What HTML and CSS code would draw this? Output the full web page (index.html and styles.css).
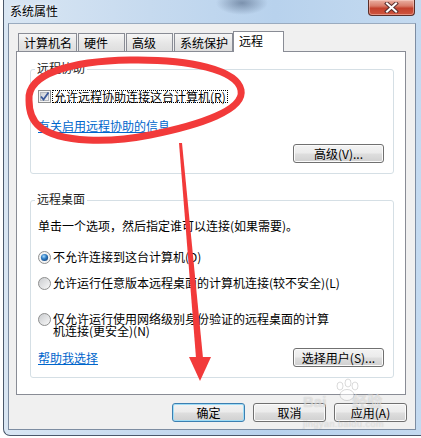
FILE: index.html
```html
<!DOCTYPE html>
<html>
	<head>
		<meta charset="utf-8">
		<title>系统属性</title>
		<link rel="stylesheet" href="styles.css">
	</head>
	<body>
	<div class="window">
		<div class="titlebar">
			<span class="title">系统属性</span>
			<div class="close">
				<svg width="15" height="11" viewBox="0 0 15 11">
					<path d="M3 1.5 L12 9.5 M12 1.5 L3 9.5" stroke="#5a3030" stroke-width="4" stroke-linecap="square" fill="none"/>
					<path d="M3 1.5 L12 9.5 M12 1.5 L3 9.5" stroke="#fff" stroke-width="2" stroke-linecap="square" fill="none"/>
				</svg>
			</div>
		</div>
		<div class="frame">
			<div class="client">
				<ul class="tabs">
					<li class="tab">计算机名</li>
					<li class="tab">硬件</li>
					<li class="tab">高级</li>
					<li class="tab">系统保护</li>
					<li class="tab tab_on">远程</li>
				</ul>
				<div class="panel">
					<!--远程协助-->
					<div class="group group_assist">
						<div class="group_title">远程协助</div>
						<div class="check_row">
							<svg class="checkbox" width="13" height="13" viewBox="0 0 13 13">
								<defs>
									<linearGradient id="cbg" x1="0" y1="0" x2="1" y2="1">
										<stop offset="0" stop-color="#cbcfd5"/>
										<stop offset="1" stop-color="#f6f6f6"/>
									</linearGradient>
								</defs>
								<rect x="0.5" y="0.5" width="12" height="12" fill="#f4f4f4" stroke="#8e8f8f"/>
								<rect x="2.5" y="2.5" width="8" height="8" fill="url(#cbg)" stroke="#b4b8be"/>
								<path d="M3 6.5 L5.5 9.5 L10.5 2.5" stroke="#3c5a9a" stroke-width="1.8" fill="none"/>
							</svg>
							<span class="focus">允许远程协助连接这台计算机(R)</span>
						</div>
						<a class="link" href="javascript:;">有关启用远程协助的信息</a>
						<div class="btn_row btn_row_end">
							<span class="btn btn_wide">高级(V)...</span>
						</div>
					</div>
					<!--远程桌面-->
					<div class="group group_desk">
						<div class="group_title">远程桌面</div>
						<p class="desc">单击一个选项，然后指定谁可以连接(如果需要)。</p>
						<div class="radio_row radio_first">
							<svg class="radio" width="13" height="13" viewBox="0 0 13 13">
								<defs>
									<radialGradient id="rdot" cx="0.4" cy="0.35" r="0.7">
										<stop offset="0" stop-color="#a9dcfb"/>
										<stop offset="0.5" stop-color="#2f7cc4"/>
										<stop offset="1" stop-color="#17487f"/>
									</radialGradient>
								</defs>
								<circle cx="6.5" cy="6.5" r="6" fill="#f2f2f2" stroke="#8e8f8f"/>
								<circle cx="6.5" cy="6.5" r="3.6" fill="url(#rdot)"/>
							</svg>
							<span>不允许连接到这台计算机(D)</span>
						</div>
						<div class="radio_row">
							<svg class="radio" width="13" height="13" viewBox="0 0 13 13">
								<defs>
									<linearGradient id="roff" x1="0" y1="0" x2="1" y2="1">
										<stop offset="0" stop-color="#c8cacd"/>
										<stop offset="1" stop-color="#fafafa"/>
									</linearGradient>
								</defs>
								<circle cx="6.5" cy="6.5" r="6" fill="url(#roff)" stroke="#8e8f8f"/>
							</svg>
							<span>允许运行任意版本远程桌面的计算机连接(较不安全)(L)</span>
						</div>
						<div class="radio_row radio_multi">
							<svg class="radio" width="13" height="13" viewBox="0 0 13 13">
								<circle cx="6.5" cy="6.5" r="6" fill="url(#roff)" stroke="#8e8f8f"/>
							</svg>
							<span class="multi_text">仅允许运行使用网络级别身份验证的远程桌面的计算机连接(更安全)(N)</span>
						</div>
						<div class="btn_row">
							<a class="link link_inline" href="javascript:;">帮助我选择</a>
							<span class="btn btn_wide">选择用户(S)...</span>
						</div>
					</div>
				</div>
				<div class="dialog_btns">
					<span class="btn btn_default">确定</span>
					<span class="btn">取消</span>
					<span class="btn">应用(A)</span>
				</div>
			</div>
		</div>
	</div>
	<!--标注-->
	<svg class="marks" width="421" height="438" viewBox="0 0 421 438">
		<path d="M29 100 C27 74 70 61 130 60 C190 59 237 70 241 90 C245 110 200 125 150 135 C110 143 60 143 40 127 C31 120 29 110 29 100 Z" fill="none" stroke="#f23a3a" stroke-width="7"/>
		<polygon points="179,143 182,143 203,358 196,358" fill="#f23a3a"/>
		<polygon points="189,357 211,357 200,381" fill="#f23a3a"/>
		<!--水印爪印-->
		<g fill="rgba(255,255,255,.55)" stroke="rgba(120,120,120,.35)" stroke-width="0.8">
			<ellipse cx="340" cy="386" rx="3" ry="4"/>
			<ellipse cx="348" cy="383" rx="3" ry="4"/>
			<ellipse cx="355" cy="386" rx="3" ry="4"/>
			<ellipse cx="347" cy="395" rx="7" ry="5.5"/>
		</g>
	</svg>
	<div class="watermark">
		<span class="wm_big">Bai<span class="wm_gap"></span>经验</span>
		<span class="wm_small">jingyan.baidu.com</span>
	</div>
	</body>
</html>
```

FILE: styles.css
```css
*{margin:0;padding:0;box-sizing:border-box;list-style:none;}
body{width:421px;height:438px;overflow:hidden;background:#fff;font:12px/14px "Noto Sans CJK SC","DejaVu Sans",sans-serif;color:#000;position:relative;}
/*窗口*/
.window{margin-left:3px;width:418px;height:436px;border-left:1px solid #4a586b;border-bottom:1px solid #4a586b;border-bottom-left-radius:7px;background:radial-gradient(ellipse 26px 12px at 238px 3px,rgba(70,90,120,.55),rgba(70,90,120,0)),linear-gradient(to right,#d9e6f3 0%,#c6daef 35%,#b8d2ed 65%,#c4daf0 100%);}
.titlebar{display:flex;justify-content:space-between;height:23px;padding:0 6px;}
.title{margin-top:4px;line-height:14px;text-shadow:0 0 5px #eef4fb,0 0 3px #eef4fb;}
.close{width:47px;height:16px;border:1px solid #5b2e28;border-top:none;border-radius:0 0 4px 4px;background:linear-gradient(#eab0a3 0%,#d87b69 40%,#c3412d 55%,#cf5640 100%);box-shadow:inset 0 0 0 1px rgba(255,220,210,.45);display:flex;align-items:center;justify-content:center;}
.frame{padding:0 5px 5px 4px;}
.client{height:407px;background:#f0f0f0;border:1px solid #7d8da2;border-top-color:#9aabbf;padding:7px 8px 7px 7px;}
/*选项卡*/
.tabs{display:flex;align-items:flex-end;height:20px;padding-left:2px;position:relative;z-index:1;}
.tab{height:18px;min-width:47px;padding:0 4px 0 5px;margin-right:1px;border:1px solid #898c95;border-bottom:none;background:linear-gradient(#f6f6f6,#e6e6e6 55%,#dedede);line-height:17px;white-space:nowrap;}
.tab_on{height:21px;width:51px;margin:0 0 -1px -1px;padding-left:5px;background:#fff;line-height:18px;}
.panel{height:344px;margin-right:1px;border:1px solid #898c95;background:#fff;padding-top:17px;}
/*分组*/
.group{margin:0 11px 0 13px;border:1px solid #d5dfe5;border-radius:3px;padding:0 9px 10px 7px;}
.group_assist{height:105px;}
.group_desk{height:178px;margin-top:26px;}
.group_title{width:max-content;margin:-9px 0 0 -3px;padding:0 2px;background:#fff;line-height:14px;color:#1b1b1b;}
.check_row{display:flex;align-items:center;height:13px;margin-top:15px;}
.checkbox{flex:none;margin-right:1px;}
.focus{height:13px;border:1px dotted #000;padding:0 1px;line-height:11px;white-space:nowrap;}
.link{display:block;width:max-content;margin-top:16px;color:#0066cc;text-decoration:underline;line-height:14px;}
.link_inline{margin-top:0;}
.btn_row{display:flex;justify-content:space-between;align-items:center;margin-top:11px;}
.btn_row_end{justify-content:flex-end;}
.desc{margin-top:13px;line-height:14px;}
.radio_row{display:flex;align-items:center;height:14px;}
.radio_first{margin-top:17px;}
.radio_row+.radio_row{margin-top:12px;}
.radio_row+.radio_multi{margin-top:23px;height:auto;align-items:flex-start;}
.radio{flex:none;margin-right:2px;}
.multi_text{width:282px;line-height:12px;}
/*按钮*/
.btn{display:flex;align-items:center;justify-content:center;width:73px;height:19px;border:1px solid #707070;border-radius:3px;background:linear-gradient(#f3f3f3 0%,#ebebeb 48%,#dedede 52%,#d0d0d0 100%);box-shadow:inset 0 0 0 1px #fbfbfb;line-height:17px;white-space:nowrap;}
.btn_wide{width:91px;}
.btn_default{border-color:#3c7fb1;box-shadow:inset 0 0 0 1px #9fdcf6;}
.dialog_btns{display:flex;justify-content:flex-end;gap:8px;margin-top:8px;}
/*标注*/
.marks{position:absolute;left:0;top:0;pointer-events:none;}
.watermark{position:absolute;left:303px;top:393px;display:flex;flex-direction:column;align-items:flex-start;color:rgba(255,255,255,.5);text-shadow:0 0 1px rgba(110,110,110,.4);pointer-events:none;}
.wm_big{display:flex;align-items:center;font:bold 15px/17px "Liberation Sans","Noto Sans CJK SC",sans-serif;}
.wm_gap{width:26px;}
.wm_small{margin-top:9px;font:9px/10px "Liberation Sans",sans-serif;letter-spacing:.5px;}
```
